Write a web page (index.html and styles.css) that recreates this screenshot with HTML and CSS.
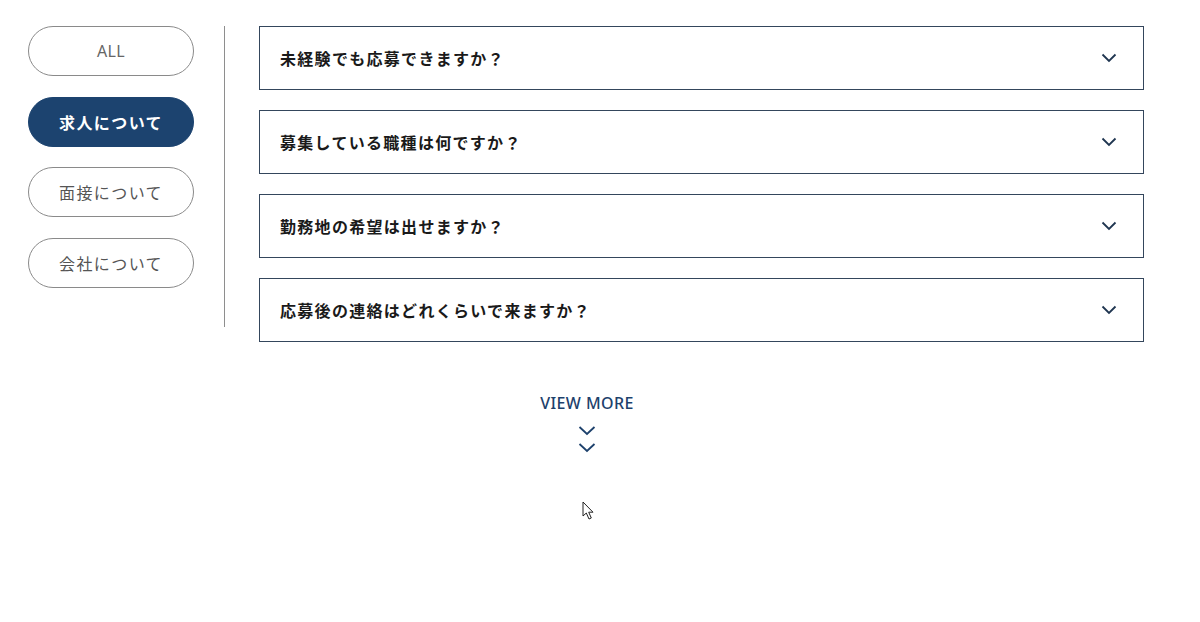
FILE: index.html
```html
<!DOCTYPE html>
<html lang="ja">
<head>
<meta charset="utf-8">
<title>FAQ</title>
<link rel="stylesheet" href="styles.css">
</head>
<body>
<div class="page">
  <div class="faq-area">
    <nav class="tabs">
      <button class="pill pill-latin">ALL</button>
      <button class="pill active">求人について</button>
      <button class="pill">面接について</button>
      <button class="pill">会社について</button>
    </nav>
    <div class="faq-list">
      <div class="faq-item"><span class="q">未経験でも応募できますか？</span><svg class="chev" width="16" height="10" viewBox="0 0 16 10"><path d="M1.5 1.5 L8 8 L14.5 1.5" fill="none" stroke="#1f3550" stroke-width="1.8"/></svg></div>
      <div class="faq-item"><span class="q">募集している職種は何ですか？</span><svg class="chev" width="16" height="10" viewBox="0 0 16 10"><path d="M1.5 1.5 L8 8 L14.5 1.5" fill="none" stroke="#1f3550" stroke-width="1.8"/></svg></div>
      <div class="faq-item"><span class="q">勤務地の希望は出せますか？</span><svg class="chev" width="16" height="10" viewBox="0 0 16 10"><path d="M1.5 1.5 L8 8 L14.5 1.5" fill="none" stroke="#1f3550" stroke-width="1.8"/></svg></div>
      <div class="faq-item"><span class="q">応募後の連絡はどれくらいで来ますか？</span><svg class="chev" width="16" height="10" viewBox="0 0 16 10"><path d="M1.5 1.5 L8 8 L14.5 1.5" fill="none" stroke="#1f3550" stroke-width="1.8"/></svg></div>
    </div>
  </div>
  <div class="more">
    <span class="more-label">VIEW MORE</span>
    <svg class="more-chev" width="18" height="29" viewBox="0 0 18 29"><path d="M1.5 2 L9 9 L16.5 2" fill="none" stroke="#1d416c" stroke-width="1.8"/><path d="M1.5 19 L9 26 L16.5 19" fill="none" stroke="#1d416c" stroke-width="1.8"/></svg>
  </div>
  <svg class="cursor" width="14" height="20" viewBox="0 0 14 20"><path d="M1 1 L1 15 L4.3 12 L7 18 L9.3 17 L6.7 11.2 L11 11.2 Z" fill="#fff" stroke="#222" stroke-width="1"/></svg>
</div>
</body>
</html>
```
FILE: styles.css
```css
html, body {
  margin: 0;
  padding: 0;
  background: #fff;
}
body {
  font-family: "Noto Sans CJK JP", "Noto Sans", sans-serif;
  color: #222;
}
.page {
  position: relative;
  width: 1200px;
  height: 622px;
  overflow: hidden;
}
.faq-area {
  display: flex;
  align-items: flex-start;
  padding: 26px 0 0 28px;
}
.tabs {
  display: flex;
  flex-direction: column;
  gap: 20.7px;
  width: 197px;
  height: 301px;
  border-right: 1px solid #8e8e8e;
  box-sizing: border-box;
}
.pill {
  width: 166px;
  height: 50px;
  box-sizing: border-box;
  border: 1px solid #8a8a8a;
  border-radius: 25px;
  background: #fff;
  color: #555;
  font-family: "Noto Sans CJK JP", sans-serif;
  font-size: 16px;
  letter-spacing: 1.4px;
  padding: 0;
  cursor: pointer;
}
.pill-latin {
  font-family: "Noto Sans", sans-serif;
  color: #666;
  letter-spacing: 0.3px;
}
.pill.active {
  background: #1c436f;
  border-color: #1c436f;
  color: #fff;
  font-weight: 700;
}
.faq-list {
  display: flex;
  flex-direction: column;
  gap: 20px;
  margin-left: 34px;
  width: 885px;
}
.faq-item {
  height: 64px;
  box-sizing: border-box;
  border: 1px solid #34465c;
  display: flex;
  align-items: center;
  justify-content: space-between;
  padding: 0 26px 0 20px;
}
.q {
  font-size: 16px;
  font-weight: 700;
  letter-spacing: 1.3px;
  color: #1a1a1a;
}
.chev {
  display: block;
  margin-top: 0;
}
.more {
  display: flex;
  flex-direction: column;
  align-items: center;
  padding: 50px 26px 0 0;
}
.more-label {
  font-family: "Noto Sans", sans-serif;
  font-size: 16px;
  font-weight: 500;
  letter-spacing: 0.4px;
  color: #1d416c;
  line-height: 22px;
}
.more-chev {
  display: block;
  margin-top: 11px;
}
.cursor {
  position: absolute;
  left: 582px;
  top: 501px;
}
```
